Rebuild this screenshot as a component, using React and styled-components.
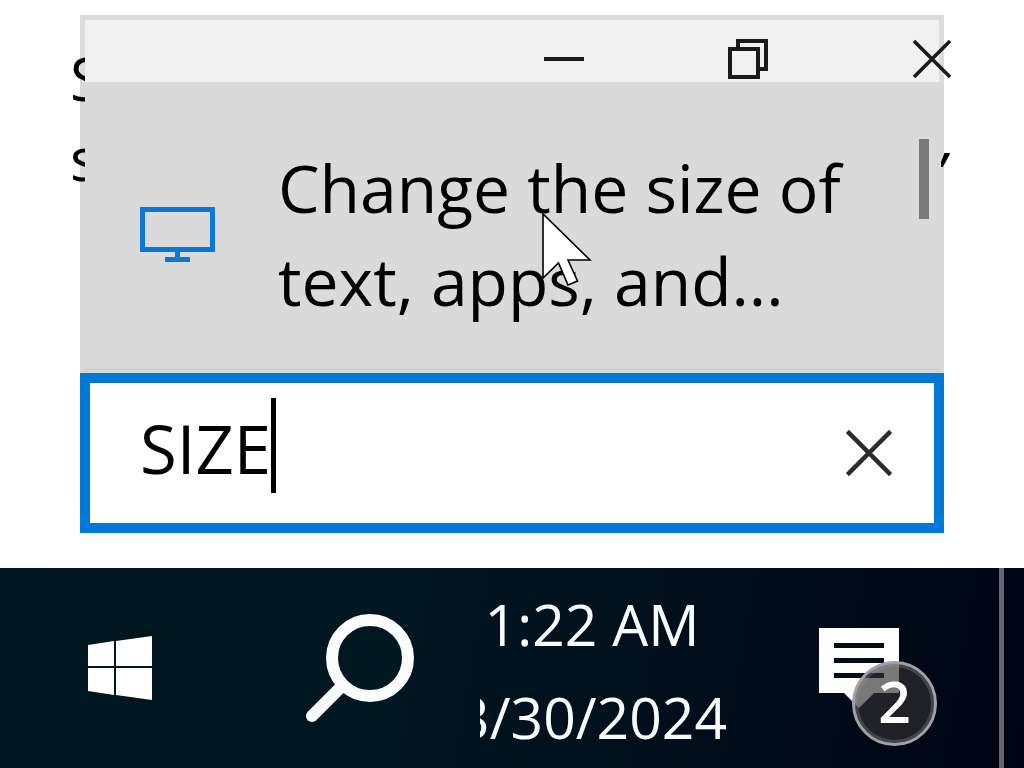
import React, { useState } from "react"
import styled, { createGlobalStyle } from "styled-components"

const GlobalStyle = createGlobalStyle`
  * {
    box-sizing: border-box;
  }

  body {
    margin: 0;
    background: #fff;
    color: #000;
    font-family: "Open Sans", "Noto Sans", sans-serif;
  }

  button {
    padding: 0;
    border: 0;
    background: none;
    color: inherit;
    font: inherit;
  }

  svg {
    display: block;
  }
`

const MinimizeIcon = () => (
  <svg width="40" height="40" viewBox="0 0 40 40" fill="#1a1a1a">
    <rect x="0" y="18" width="40" height="4" />
  </svg>
)

const RestoreIcon = () => (
  <svg width="40" height="40" fill="none" stroke="#1a1a1a" strokeWidth="4">
    <rect x="2" y="10" width="28" height="28" />
    <path d="M10 10V2H38V30H30" />
  </svg>
)

const CrossIcon = ({ size, color }) => (
  <svg width={size} height={size} viewBox="0 0 40 40">
    <path d="M2 2L38 38M38 2L2 38" stroke={color} strokeWidth="3.6" />
  </svg>
)

const MonitorIcon = () => (
  <svg width="75" height="55" viewBox="0 0 75 55" fill="#0a78d4">
    <path d="M0 0H75V45H40V50H50V55H25V50H35V45H0ZM5 5V40H70V5Z" fillRule="evenodd" />
  </svg>
)

const WindowsIcon = () => (
  <svg width="64" height="64" viewBox="0 0 64 64" fill="#fff">
    <path d="M0 9L26 5V30H0ZM28 5L64 0V30H28ZM0 32H26V59L0 55ZM28 32H64V64L28 59Z" />
  </svg>
)

const SearchIcon = () => (
  <svg width="108" height="108" viewBox="0 0 108 108" fill="none" stroke="#fafcff" strokeWidth="12">
    <circle cx="64" cy="44" r="38" />
    <path d="M37 71L6 102" strokeLinecap="round" />
  </svg>
)

const MessageIcon = () => (
  <svg width="80" height="80" viewBox="0 0 80 80">
    <path d="M0 0H80V65H55L40 80L25 65H0Z" fill="#fff" />
    <path d="M15 15H65V20H15ZM15 30H65V35H15ZM15 45H65V50H15Z" fill="#000b18" />
  </svg>
)

const App = () => {
  const [query, setQuery] = useState("SIZE")

  return (
    <Screen>
      <GlobalStyle />
      <Desktop>
        <Flyout>
          <TitleBar>
            <WindowButton aria-label="Minimize">
              <MinimizeIcon />
            </WindowButton>
            <WindowButton aria-label="Restore">
              <RestoreIcon />
            </WindowButton>
            <WindowButton aria-label="Close">
              <CrossIcon size={40} color="#1a1a1a" />
            </WindowButton>
          </TitleBar>
          <Results>
            <ResultList>
              <Result>
                <MonitorIcon />
                <ResultText>
                  Change the size of
                  <br />
                  text, apps, and...
                </ResultText>
              </Result>
              <ScrollThumb />
            </ResultList>
          </Results>
          <SearchBox>
            <SearchInput
              aria-label="Search"
              value={query}
              onChange={e => setQuery(e.target.value)}
            />
            <Caret />
            <ClearButton aria-label="Clear" onClick={() => setQuery("")}>
              <CrossIcon size={48} color="#2b2b2b" />
            </ClearButton>
          </SearchBox>
          <LeftPeek>
            S<br />s
          </LeftPeek>
          <RightPeek>,</RightPeek>
          <Pointer width="50" height="76" viewBox="0 0 50 76">
            <path
              d="M1 2V66L16.5 51L26 73L35.5 69L26 48H48Z"
              fill="#fff"
              stroke="#000"
              strokeWidth="1.6"
            />
          </Pointer>
        </Flyout>
      </Desktop>
      <Taskbar>
        <TaskButton aria-label="Start">
          <WindowsIcon />
        </TaskButton>
        <TaskButton aria-label="Search">
          <SearchIcon />
        </TaskButton>
        <Clock>
          <ClockText>
            1:22 AM
            <br />
            3/30/2024
          </ClockText>
        </Clock>
        <TaskButton aria-label="Notifications">
          <MessageWrapper>
            <MessageIcon />
            <Badge>2</Badge>
          </MessageWrapper>
        </TaskButton>
        <ShowDesktop aria-label="Show desktop" />
      </Taskbar>
    </Screen>
  )
}

export default App

const Screen = styled.div`
  display: flex;
  flex-direction: column;
  min-height: 100vh;
`

const Desktop = styled.main`
  flex: 1;
  padding: 15px 80px 35px;
`

const Flyout = styled.section`
  position: relative;
`

const TitleBar = styled.div`
  display: flex;
  align-items: center;
  justify-content: flex-end;
  gap: 144px;
  height: 67px;
  padding-top: 16px;
  border: 5px solid #dcdcdc;
  border-bottom: 0;
  background: #f1f1f1;
`

const WindowButton = styled.button`
  width: 40px;
  height: 40px;

  &:last-child {
    margin-right: -13px;
  }
`

const Results = styled.div`
  padding: 0 5px 3px;
  background: #dadada;
`

const ResultList = styled.div`
  display: flex;
  align-items: flex-start;
  padding-right: 10px;
  border-bottom: 1px solid #c6c6c6;
`

const Result = styled.button`
  display: flex;
  flex: 1;
  align-items: center;
  gap: 60px;
  padding: 59px 0 42px 55px;
  text-align: left;
`

const ResultText = styled.span`
  padding-left: 3px;
  font-size: 66px;
  line-height: 93px;
  white-space: nowrap;
`

const ScrollThumb = styled.div`
  width: 10px;
  height: 80px;
  margin-top: 57px;
  background: #7a7a7a;
`

const SearchBox = styled.div`
  display: flex;
  align-items: flex-start;
  height: 160px;
  padding: 15px 41px 15px 50px;
  border: 10px solid #0078d7;
  background: #fff;
`

const SearchInput = styled.input`
  field-sizing: content;
  height: 95px;
  padding: 4px 0 0;
  border: 0;
  outline: 0;
  background: none;
  color: #000;
  font-family: inherit;
  font-size: 67px;
  line-height: 91px;
`

const Caret = styled.span`
  width: 5px;
  height: 95px;
  background: #000;
`

const ClearButton = styled.button`
  align-self: center;
  margin-left: auto;
`

// slivers of the window behind that show at the edges of the flyout
const Peek = styled.span`
  position: absolute;
  width: 15px;
  overflow: hidden;
  font-size: 60px;
`

const LeftPeek = styled(Peek)`
  top: 23px;
  left: -10px;
  line-height: 80px;
`

const RightPeek = styled(Peek)`
  top: 102px;
  right: -12px;
  height: 50px;
  font-style: italic;
  line-height: 40px;
`

const Pointer = styled.svg`
  position: absolute;
  top: 197px;
  left: 462px;
`

const Taskbar = styled.footer`
  display: flex;
  height: 200px;
  background: linear-gradient(100deg, #001820 0%, #001620 40%, #000c1a 72%, #000514 100%);
  color: #f8fcff;
`

const TaskButton = styled.button`
  display: flex;
  flex: 0 0 240px;
  align-items: center;
  justify-content: center;
`

const Clock = styled.button`
  display: flex;
  flex: 1;
  align-items: center;
  justify-content: flex-end;
  min-width: 0;
  padding: 6px 12px 0 0;
  overflow: hidden;
`

const ClockText = styled.span`
  font-size: 57px;
  line-height: 93px;
  text-align: center;
  white-space: nowrap;
`

const MessageWrapper = styled.span`
  position: relative;
`

const Badge = styled.span`
  position: absolute;
  top: 33px;
  left: 33px;
  width: 85px;
  height: 85px;
  border: 3px solid #a0a0a8;
  border-radius: 50%;
  box-shadow: inset 0 0 0 3px rgba(150, 150, 155, 0.3);
  background: rgba(48, 48, 48, 0.65);
  color: #fff;
  font-size: 57px;
  font-weight: 600;
  line-height: 75px;
  text-align: center;
`

const ShowDesktop = styled.button`
  width: 25px;
  margin-left: 20px;
  border-left: 5px solid #626673;
`
